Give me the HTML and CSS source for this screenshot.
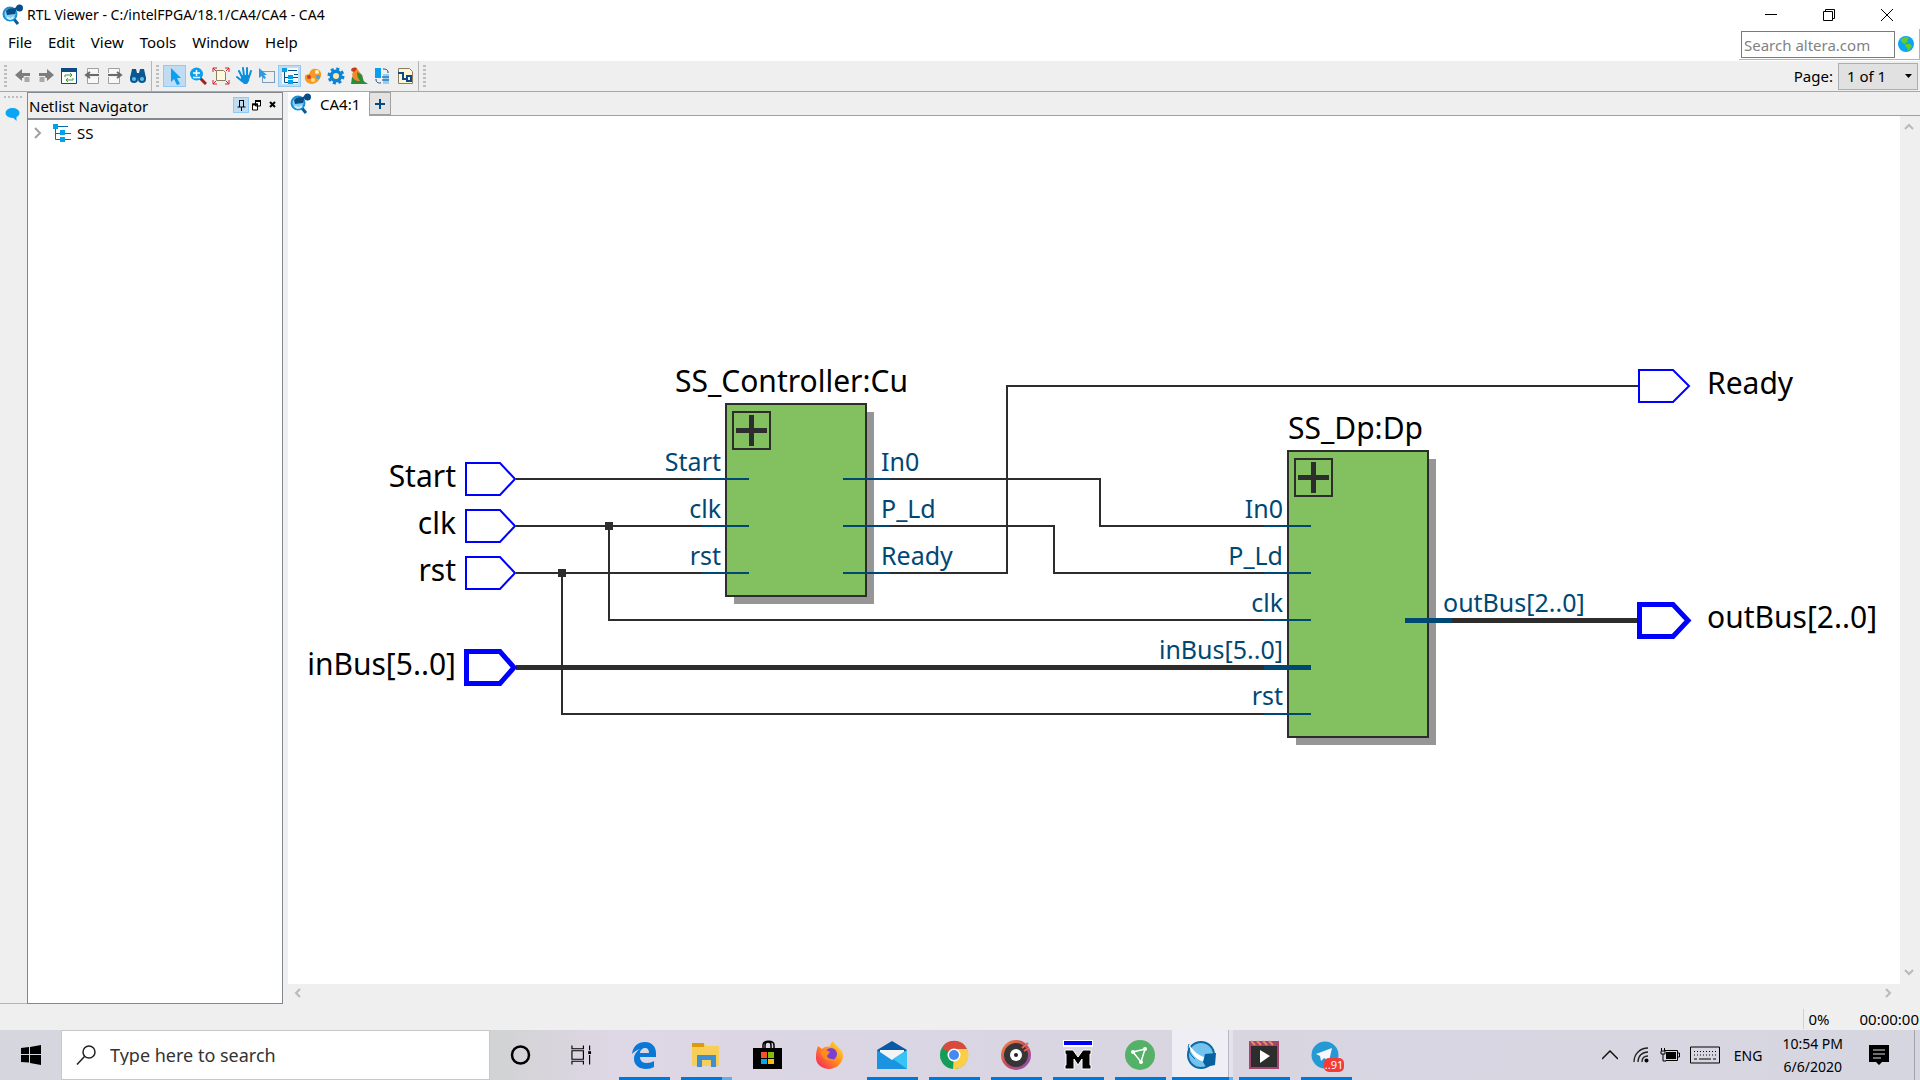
FILE: index.html
```html
<!DOCTYPE html>
<html lang="en">
<head>
<meta charset="utf-8">
<title>RTL Viewer - C:/intelFPGA/18.1/CA4/CA4 - CA4</title>
<link rel="stylesheet" href="styles.css">
</head>
<body>
<svg class="defs" aria-hidden="true">
  <symbol id="viewer" viewBox="0 0 22 22">
    <path d="M11 14l5 6" stroke="#0a5a9c" stroke-width="3"/>
    <circle cx="8" cy="10" r="6.500" fill="#7fd0f7" stroke="#1b8fd0" stroke-width="2"/>
    <path d="M4 7c3-4 7-3 10-1l-1 4-8 1z" fill="#0a4c86"/>
    <path d="M11 6l6-3" stroke="#0a4c86" stroke-width="2"/>
    <circle cx="17.500" cy="4" r="3.500" fill="#0a4c86"/>
    <path d="M5 13c2 3 5 2 7 0" stroke="#c9edff" stroke-width="2" fill="none"/>
  </symbol>
  <symbol id="tree" viewBox="0 0 18 18">
    <path d="M2.500 3v12.500H18M3 9.500h15M5 2.500h10" stroke="#0b6aa8" stroke-width="1" fill="none"/>
    <path d="M0 0h5v5H0zM7 6h5v5H7zM7 13h5v5H7z" fill="#00a2e8"/>
  </symbol>
  <symbol id="chev" viewBox="0 0 10 10"><path d="M1 7l4-4 4 4" stroke="#b9b9b9" stroke-width="2" fill="none"/></symbol>
</svg>

<header class="titlebar">
  <svg class="appicon"><use href="#viewer"/></svg>
  <h1 class="title">RTL Viewer - C:/intelFPGA/18.1/CA4/CA4 - CA4</h1>
  <div class="wincontrols">
    <button aria-label="Minimize"><svg viewBox="0 0 12 12"><path d="M0 5.500h12"/></svg></button>
    <button aria-label="Restore"><svg viewBox="0 0 12 12"><path d="M.5 2.500h9v9h-9zM2.500 2.500v-2h9v9h-2"/></svg></button>
    <button aria-label="Close"><svg viewBox="0 0 12 12"><path d="M0 0l12 12M12 0L0 12"/></svg></button>
  </div>
</header>

<nav class="menubar">
  <button>File</button><button>Edit</button><button>View</button><button>Tools</button><button>Window</button><button>Help</button>
  <form class="websearch">
    <input type="text" placeholder="Search altera.com" aria-label="Search altera.com">
    <svg class="globe" viewBox="0 0 16 16"><circle cx="8" cy="8" r="8" fill="#0aa5f5"/><path d="M3 3l5-2 3 1-2 2 1 2-3 1 1 2-3-2-2-2zM8 8l4 0 2 2-2 3-2 2-1-3-2-2z" fill="#66cc22"/></svg>
  </form>
</nav>

<div class="toolbars">
  <div class="toolbar">
    <span class="grip"></span>
    <button aria-label="Back"><svg viewBox="0 0 18 18"><path d="M1 8l7-6v4h8v5H8v3z" fill="#7d7d7d"/><path d="M10 9.500h6v6h-6z" fill="#a9a9a9" stroke="#efefef"/></svg></button>
    <button aria-label="Forward"><svg viewBox="0 0 18 18"><path d="M17 8l-7-6v4H2v5h8v3z" fill="#7d7d7d"/><path d="M2 9.500h6v6H2z" fill="#a9a9a9" stroke="#efefef"/></svg></button>
    <button aria-label="Refresh"><svg viewBox="0 0 18 18"><path d="M1.500 1.500h15v15h-15z" fill="#fff" stroke="#0d4b86"/><path d="M1 1h16v4H1z" fill="#0d4b86"/><path d="M5 10V8h7m-2-2l2 2-2 2M13 11v2H6m2-2l-2 2 2 2" stroke="#3e9b35" stroke-width="1" fill="none"/></svg></button>
    <button aria-label="Previous page"><svg viewBox="0 0 18 18"><path d="M4.500 6V1.500h11V6M4.500 10v6.500h11V10" fill="#f8f8f8" stroke="#a0a0a0"/><path d="M16 8H3m4-3L3 8l4 3" stroke="#6b6b6b" stroke-width="2" fill="none"/></svg></button>
    <button aria-label="Next page"><svg viewBox="0 0 18 18"><path d="M2.500 6V1.500h11V6M2.500 10v6.500h11V10" fill="#f8f8f8" stroke="#a0a0a0"/><path d="M2 8h13m-4-3l4 3-4 3" stroke="#6b6b6b" stroke-width="2" fill="none"/></svg></button>
    <button aria-label="Find"><svg viewBox="0 0 18 18"><path d="M3 2h4l1 4h2l1-4h4l2 9H1z" fill="#0b5791"/><circle cx="5" cy="12" r="4" fill="#0b5791"/><circle cx="13" cy="12" r="4" fill="#0b5791"/><circle cx="5" cy="12" r="2" fill="#5fc0f0"/><circle cx="13" cy="12" r="2" fill="#5fc0f0"/></svg></button>
  </div>
  <div class="toolbar">
    <span class="grip"></span>
    <button class="on" aria-label="Select"><svg viewBox="0 0 18 18"><path d="M5 1v14l3-3 3 6 3-1-3-6h4z" fill="#0b9ff0"/></svg></button>
    <button aria-label="Zoom"><svg viewBox="0 0 18 18"><path d="M11 11l6 6" stroke="#a32020" stroke-width="3"/><circle cx="7.500" cy="7" r="6.500" fill="#0b9ff0"/><path d="M4 6h7M7.500 3v6M4 10.500h7" stroke="#fff" stroke-width="1.500"/></svg></button>
    <button aria-label="Fit in window"><svg viewBox="0 0 18 18"><path d="M4.500 3.500h7l2 2v8h-9z" fill="#fff8dc" stroke="#8a8060"/><path d="M1 5V1h4M1 1l3 3M13 1h4v4M17 1l-3 3M1 13v4h4M1 17l3-3M13 17h4v-4M17 17l-3-3" stroke="#e01b24" fill="none"/></svg></button>
    <button aria-label="Hand"><svg viewBox="0 0 18 18"><path d="M4 4l3 6M8 1l1 8M12 1v8M16 4l-2 6M2 10l5 4" stroke="#0b8fe0" stroke-width="2" stroke-linecap="round"/><path d="M6 8h9l-1 6-2 3H9l-3-3z" fill="#0b8fe0"/></svg></button>
    <button aria-label="Area selection"><svg viewBox="0 0 18 18"><path d="M4.500 4.500h12v11h-12z" fill="none" stroke="#0d4b86" stroke-dasharray="1 1"/><path d="M1 1v10l3-2 2 3 2-1-2-3h3z" fill="#2a9be0"/></svg></button>
    <button class="on" aria-label="Netlist Navigator"><svg viewBox="0 0 18 18"><rect x="1" y="1" width="16" height="16" fill="#f4fafe"/><path d="M3.500 4v11.500H17M3 10.500h14M7 3.500h9M13 7.500h4" stroke="#0d4b86" fill="none"/><path d="M1 1h5v4H1zM7 8h5v4H7zM7 13h5v4H7z" fill="#00a2e8"/></svg></button>
    <button aria-label="Color settings"><svg viewBox="0 0 18 18"><path d="M9 2c6-1 9 3 8 7s-5 8-9 8c-5 0-8-4-7-8 0-2 3-1 4-2s1-4 4-5z" fill="#f59a23"/><circle cx="13" cy="5" r="2" fill="#fff2c0"/><circle cx="14" cy="10" r="2" fill="#3ba7e8"/><circle cx="5" cy="10" r="2" fill="#d43a2a"/><circle cx="9" cy="13" r="2" fill="#fbe08a"/></svg></button>
    <button aria-label="Options"><svg viewBox="0 0 18 18"><circle cx="9" cy="9" r="7" fill="none" stroke="#0b84d8" stroke-width="3" stroke-dasharray="3 2.500"/><circle cx="9" cy="9" r="5" fill="#0b84d8" stroke="#0b84d8" stroke-width="3"/><circle cx="9" cy="9" r="3" fill="#ffe9a0"/></svg></button>
    <button aria-label="Bird's eye view"><svg viewBox="0 0 18 18"><path d="M2 10l4 1 6 2 6 4H1z" fill="#2e8b3a"/><path d="M1 4c1-4 6-4 7-1l4 5 1 6H8C3 13 1 9 3 5z" fill="#f08a2c"/><path d="M7 5l5 3 2 7-4-1C8 11 7 9 7 5z" fill="#2e8b3a"/><path d="M1 3c1-3 5-3 6-1L4 5z" fill="#c33b1c"/></svg></button>
    <button aria-label="Highlight fan-out"><svg viewBox="0 0 18 18"><path d="M2 1h6v10H2z" fill="#0b9ff0"/><path d="M10 7h6v10h-6z" fill="#8fd0f5"/><path d="M10 2c4 0 5 1 5 4M8 16c-4 0-5-1-5-4M9 10h7M9 13h7" stroke="#0d4b86" fill="none" stroke-width="1"/></svg></button>
    <button aria-label="Layout"><svg viewBox="0 0 18 18"><path d="M2.500 1.500h11l3 3v12h-14z" fill="#fff6d6" stroke="#8a8060"/><path d="M2 6h5v6h4M11 9h4v5h-4z" stroke="#0d4b86" stroke-width="2" fill="none"/></svg></button>
  </div>
  <div class="toolbar last"><span class="grip"></span></div>
  <div class="pager">
    <label for="page">Page:</label>
    <span class="selectwrap"><select id="page"><option>1 of 1</option></select><svg viewBox="0 0 7 4"><path d="M0 0h7L3.500 4z"/></svg></span>
  </div>
</div>

<main class="workspace">
  <aside class="strip"><span class="hgrip"></span><svg viewBox="0 0 14 13"><ellipse cx="7" cy="5" rx="7" ry="5" fill="#0aa5f5"/><path d="M6 8h5l0 5z" fill="#0aa5f5"/></svg></aside>
  <section class="navigator">
    <header class="navhead">
      <h2>Netlist Navigator</h2>
      <button class="on" aria-label="Pin"><svg viewBox="0 0 14 14"><path d="M5 2.500h5M5.500 2v7M9.500 2v7M3.500 9h8M7.500 9v4" stroke="#000" fill="none"/></svg></button>
      <button aria-label="Float"><svg viewBox="0 0 14 14"><path d="M5.500 3v5h5V3zM2.500 6v6h5V6z" fill="#fff" stroke="#000"/><path d="M5 3h6M2 6.500h6" stroke="#000" stroke-width="2"/></svg></button>
      <button aria-label="Close panel"><svg viewBox="0 0 14 14"><path d="M4 4l5 5M9 4L4 9" stroke="#000" stroke-width="2"/></svg></button>
    </header>
    <ul class="tree">
      <li><svg class="twisty" viewBox="0 0 8 12"><path d="M1 1l5 5-5 5" stroke="#a0a0a0" stroke-width="2" fill="none"/></svg><svg class="node"><use href="#tree"/></svg>SS</li>
    </ul>
  </section>
  <section class="document">
    <div class="tabs">
      <button class="tab"><svg><use href="#viewer"/></svg>CA4:1</button>
      <button class="addtab" aria-label="New tab"><svg viewBox="0 0 10 10"><path d="M0 5h10M5 0v10" stroke="#004a85" stroke-width="2"/></svg></button>
    </div>
    <div class="sheet">
      <svg class="schematic" viewBox="288 116 1612 868" preserveAspectRatio="xMidYMid meet">
        <g class="shadow"><rect x="734" y="412" width="140" height="192"/><rect x="1296" y="459" width="140" height="286"/></g>
        <g class="block"><rect x="726" y="404" width="140" height="192"/><rect x="1288" y="451" width="140" height="286"/></g>
        <g class="wire">
          <path d="M516 479H702M516 526H702M516 573H702M609 526V620H1264M562 573V714H1264"/>
          <path d="M890 479H1100V526H1264M890 526H1054V573H1264M890 573H1007V386H1638"/>
          <rect x="733" y="412" width="37" height="37"/><rect x="1295" y="459" width="37" height="37"/>
        </g>
        <path class="bus" d="M516 667.500H1264M1452 620.500H1638"/>
        <path class="plus" d="M736 430.500h31M751.500 415v31M1298 477.500h31M1313.500 462v31"/>
        <path class="dots" d="M605 522h8v8h-8zM558 569h8v8h-8z"/>
        <path class="pin" d="M702 479h47M702 526h47M702 573h47M843 479h47M843 526h47M843 573h47M1264 526h47M1264 573h47M1264 620h47M1264 714h47"/>
        <path class="pin wide" d="M1264 667.500h47M1405 620.500h47"/>
        <g class="port">
          <path d="M466 463H500L515 479L500 495H466Z"/><path d="M466 510H500L515 526L500 542H466Z"/><path d="M466 557H500L515 573L500 589H466Z"/>
          <path d="M1639 370H1673L1689 386L1673 402H1639Z"/>
        </g>
        <g class="port wide"><path d="M466.500 651.500H500L514 667.500L500 683.500H466.500Z"/><path d="M1639.500 604.500H1673L1688 620.500L1673 636.500H1639.500Z"/></g>
        <g class="name">
          <text x="675" y="392">SS_Controller:Cu</text><text x="1288" y="439">SS_Dp:Dp</text>
          <text x="1707" y="394">Ready</text><text x="1707" y="628">outBus[2..0]</text>
        </g>
        <g class="name end"><text x="456" y="487">Start</text><text x="456" y="534">clk</text><text x="456" y="581">rst</text><text x="456" y="675">inBus[5..0]</text></g>
        <g class="pinname"><text x="881" y="471">In0</text><text x="881" y="518">P_Ld</text><text x="881" y="565">Ready</text><text x="1443" y="612">outBus[2..0]</text></g>
        <g class="pinname end"><text x="721" y="471">Start</text><text x="721" y="518">clk</text><text x="721" y="565">rst</text><text x="1283" y="518">In0</text><text x="1283" y="565">P_Ld</text><text x="1283" y="612">clk</text><text x="1283" y="659">inBus[5..0]</text><text x="1283" y="705">rst</text></g>
      </svg>
      <div class="vscroll"><svg><use href="#chev"/></svg><svg class="down"><use href="#chev"/></svg></div>
      <div class="hscroll"><svg class="left"><use href="#chev"/></svg><svg class="right"><use href="#chev"/></svg></div>
    </div>
  </section>
</main>

<footer class="status"><span class="percent">0%</span><span>00:00:00</span></footer>

<div class="taskbar">
  <button class="start" aria-label="Start"><svg viewBox="0 0 20 20"><path d="M0 3l8-1v7H0zM9 2l11-2v9H9zM0 10h8v7.500L0 17zM9 10h11v10L9 18z"/></svg></button>
  <label class="tasksearch"><svg viewBox="0 0 20 20"><circle cx="13" cy="7" r="6" fill="none" stroke="#222" stroke-width="1.500"/><path d="M8.500 11.500L1 19.500" stroke="#222" stroke-width="1.500"/></svg><input type="text" placeholder="Type here to search" aria-label="Type here to search"></label>
  <button class="sys" aria-label="Cortana"><svg viewBox="0 0 20 20"><circle cx="10" cy="10" r="8.500" fill="none" stroke="#000" stroke-width="2.500"/></svg></button>
  <button class="sys" aria-label="Task View"><svg viewBox="0 0 22 20"><path d="M1 0v3.500h12V0M1 20v-3.500h12V20M1 5.500h12v9H1zM19.500 0v5M19.500 10v10" fill="none" stroke="#000" stroke-width="1.200"/><path d="M18 6h3v3h-3z"/></svg></button>
  <div class="apps">
    <button class="open" aria-label="Edge"><svg viewBox="0 0 30 30"><path d="M3 14C4 6 9 2 16 2c8 0 11 6 11 11v4H11c0 5 4 6 7 6 3 0 5-1 7-2v6c-2 1-5 2-8 2-7 0-12-4-12-10 0-5 3-8 6-10-4 1-6 3-8 5zm8-1h9c0-4-2-5-4-5s-5 2-5 5z" fill="#0a78d6"/></svg></button>
    <button class="open more" aria-label="File Explorer"><svg viewBox="0 0 30 30"><path d="M1 3h12l2 3h13v20H1z" fill="#f8ce5b"/><path d="M1 3h12v4H1z" fill="#dc9a0c"/><path d="M6 27V15h19v12h-5v-7h-9v7z" fill="#3f90d2"/></svg></button>
    <button aria-label="Microsoft Store"><svg viewBox="0 0 30 30"><path d="M10 9V5c0-5 11-5 11 0v4M12 9V5c0-4 6-4 6 0v4" fill="none" stroke="#000" stroke-width="1.500"/><path d="M0 8h29v21H0z"/><path d="M8 12h6v6H8z" fill="#f35325"/><path d="M15 12h6v6h-6z" fill="#81bc06"/><path d="M8 19h6v5H8z" fill="#05a6f0"/><path d="M15 19h6v5h-6z" fill="#ffba08"/></svg></button>
    <button aria-label="Firefox"><svg viewBox="0 0 30 30"><defs><linearGradient id="ff" x1="1" y1="0" x2="0" y2="1"><stop offset="0" stop-color="#ffe83b"/><stop offset=".5" stop-color="#ff8a1e"/><stop offset="1" stop-color="#f5156c"/></linearGradient></defs><path d="M3 6l4 3c2-2 5-3 8-2 0-2 1-4 3-6 2 5 11 8 10 16-1 7-7 12-14 12S0 24 1 16c0-4 1-7 2-10z" fill="url(#ff)"/><circle cx="16" cy="14" r="6" fill="#7b3fd3"/><path d="M5 11l6-1 4 2-3 4c1 3 4 3 7 3-6 4-12 0-14-8z" fill="#ff8a1e"/></svg></button>
    <button class="open" aria-label="Mail"><svg viewBox="0 0 30 30"><path d="M0 10L15 1l15 9v3H0z" fill="#0a58a8"/><path d="M3 10h24v8L15 24 3 18z" fill="#f4f4f4"/><path d="M0 10l15 10 15-10v19H0z" fill="#1a94e0"/><path d="M30 10v19L16 19z" fill="#38c3f4"/></svg></button>
    <button class="open" aria-label="Chrome"><svg viewBox="0 0 30 30"><circle cx="15" cy="15" r="14" fill="#149c58"/><path d="M15 15L3 8A14 14 0 0 1 28 9z" fill="#d94a3d"/><path d="M15 15V9h13A14 14 0 0 1 14 29z" fill="#fbcf45"/><circle cx="15" cy="15" r="6.500" fill="#fff"/><circle cx="15" cy="15" r="5" fill="#4688f1"/></svg></button>
    <button class="open" aria-label="Groove"><svg viewBox="0 0 30 30"><defs><linearGradient id="gr" x1="0" y1="0" x2="1" y2="1"><stop offset="0" stop-color="#f58a38"/><stop offset=".5" stop-color="#c54a60"/><stop offset="1" stop-color="#8454c8"/></linearGradient></defs><circle cx="15" cy="15" r="15" fill="url(#gr)"/><circle cx="15" cy="15" r="12" fill="#363636"/><circle cx="15" cy="15" r="6" fill="#fff"/><circle cx="15" cy="15" r="2" fill="#222"/><path d="M21 8l6-5M23 11l5-3" stroke="#e8644c" stroke-width="2"/></svg></button>
    <button class="open" aria-label="ModelSim"><svg viewBox="0 0 30 30"><path d="M0 0h30v7H0z" fill="#fff"/><path d="M1 1h28v4H1z" fill="#00f"/><path d="M2 10h8l5 7 5-7h8v4h-1v11h1v4h-9V19l-4 6-4-6v10H2v-4h1V14H2z" stroke="#fff"/></svg></button>
    <button class="open" aria-label="Network"><svg viewBox="0 0 30 30"><circle cx="15" cy="15" r="15" fill="#56b168"/><path d="M8 12l12-3-4 13z" fill="none" stroke="#fff" stroke-width="1.500"/><circle cx="8" cy="12" r="2" fill="#fff"/><circle cx="20" cy="9" r="2" fill="#fff"/><circle cx="16" cy="22" r="2" fill="#fff"/></svg></button>
    <button class="open active" aria-label="Quartus"><svg viewBox="0 0 30 30"><circle cx="14" cy="15" r="13" fill="#74c3ee" stroke="#0a69a8" stroke-width="2"/><path d="M2 4C7 13 14 17 24 19l-5 3C10 21 3 14 2 4z" fill="#fff"/><path d="M2 4c-2 4 0 10 6 15" fill="none" stroke="#0a69a8"/><path d="M18 14l11-1-1 12-9 2-3-5z" fill="#0760a0"/></svg></button>
    <button class="open" aria-label="Movies"><svg viewBox="0 0 30 30"><path d="M0 1h30v28H0z" fill="#a3456e"/><path d="M2 6h26v21H2z" fill="#2d2d2d"/><path d="M2 1l4 4M8 1l4 4M14 1l4 4M20 1l4 4" stroke="#f08a50" stroke-width="2"/><path d="M11 10l10 6-10 7z" fill="#fff"/></svg></button>
    <button class="open" aria-label="Telegram"><svg viewBox="0 0 30 30"><circle cx="14" cy="15" r="13.500" fill="#2599d4"/><path d="M5 14l16-6-3 13-5-3-3 3-1-5z" fill="#f2f8fc"/></svg><span class="badge">..91</span></button>
  </div>
  <div class="tray">
    <svg class="caret" viewBox="0 0 16 10"><path d="M0 9l8-8 8 8" fill="none" stroke="#111" stroke-width="1.500"/></svg>
    <svg class="wifi" viewBox="0 0 16 16"><path d="M1 15C1 7 7 1 15 1M5 15C5 9 9 5 15 5M9 15c0-4 2-6 6-6" fill="none" stroke="#222" stroke-width="1.300"/><circle cx="13.500" cy="13.500" r="2"/></svg>
    <svg class="battery" viewBox="0 0 20 14"><path d="M4.500 2.500h13v10h-12M18 5h1.500v4H18" fill="none" stroke="#000"/><path d="M6 4h10v7H6z"/><path d="M1 3h4v3H1zM1.500 0v3M4.500 0v3M3 6v7h3" stroke="#000" fill="none"/></svg>
    <svg class="keyboard" viewBox="0 0 30 18"><path d="M.5 1h29v16H.5z" fill="none" stroke="#000"/><path d="M4 5.500h22M4 9h22" stroke="#000" stroke-dasharray="1 2"/><path d="M4 13h3M9 13h12M23 13h3" stroke="#000"/></svg>
    <span class="lang">ENG</span>
    <time class="clock">10:54 PM<br>6/6/2020</time>
    <button class="note" aria-label="Notifications"><svg viewBox="0 0 20 20"><path d="M0 0h20v17h-7l-3 3-3-3H0z"/><path d="M4 5h12M4 9h12M4 13h8" stroke="#ddd"/></svg></button>
  </div>
</div>
</body>
</html>
```
FILE: styles.css
```css
* { box-sizing: border-box; }
html, body { height: 100%; }
body {
  margin: 0;
  display: flex;
  flex-direction: column;
  background: #efefef;
  color: #000;
  font: 15px/20px "Noto Sans", "Open Sans", sans-serif;
  overflow: hidden;
}
button, input, select { font: inherit; color: inherit; margin: 0; padding: 0; border: 0; background: none; border-radius: 0; }
svg { display: block; flex: none; }
h1, h2, ul { margin: 0; padding: 0; font-size: 15px; font-weight: 400; list-style: none; }
.defs { position: absolute; width: 0; height: 0; }

.titlebar { display: flex; align-items: center; height: 29px; background: #fff; padding-left: 2px; }
.appicon { width: 22px; height: 22px; }
.title { flex: 1; padding-left: 3px; font-size: 14px; }
.wincontrols { display: flex; padding-right: 4px; }
.wincontrols button { width: 58px; height: 29px; display: grid; place-items: center; }
.wincontrols svg { width: 12px; height: 12px; fill: none; stroke: #000; }

.menubar { display: flex; gap: 16px; height: 32px; padding-left: 8px; background: #fff; }
.menubar > button { height: 26px; }
.websearch { margin-left: auto; display: flex; gap: 3px; align-items: center; height: 31px; padding: 0 5px 0 2px; border-right: 1px solid #b4b4b4; border-bottom: 1px solid #b4b4b4; }
.websearch input { width: 154px; height: 27px; border: 1px solid #7a7a7a; padding: 1px 2px 0; background: #fff; }
.websearch input::placeholder { color: #828282; opacity: 1; }
.globe { width: 16px; height: 16px; }

.toolbars { display: flex; height: 31px; border-bottom: 1px solid #a8a8a8; }
.toolbar { display: flex; align-items: center; padding: 0 1px 0 4px; border-right: 1px solid #b4b4b4; }
.toolbar:first-child { width: 152px; }
.toolbar + .toolbar { width: 267px; }
.toolbar.last { width: auto; border: 0; }
.grip { width: 3px; height: 22px; margin-right: 4px; background: repeating-linear-gradient(#bdbdbd 0 2px, transparent 2px 4px); }
.toolbar button { flex: none; width: 23px; height: 22px; display: grid; place-items: center; border: 1px solid transparent; }
.toolbar svg { width: 18px; height: 18px; }
.toolbar .on, .navhead .on { background: #c0dcf3; border: 1px solid #90c8f6; }
.pager { display: flex; align-items: center; gap: 5px; margin-left: auto; padding-right: 2px; }
.selectwrap { display: flex; align-items: center; width: 80px; height: 27px; border: 1px solid #adadad; background: #e1e1e1; padding-right: 5px; }
.selectwrap select { appearance: none; flex: 1; height: 25px; padding-left: 8px; }
.selectwrap svg { width: 7px; height: 4px; }

.workspace { flex: 1; min-height: 0; display: flex; }
.strip { width: 27px; border-bottom: 1px solid #b4b4b4; display: flex; flex-direction: column; align-items: center; gap: 10px; padding: 4px 2px 0 0; }
.hgrip { width: 18px; height: 2px; background: repeating-linear-gradient(90deg, #bdbdbd 0 2px, transparent 2px 4px); }
.strip svg { width: 15px; height: 13px; }
.navigator { width: 256px; display: flex; flex-direction: column; border: 1px solid #828790; }
.navhead { display: flex; align-items: center; height: 27px; padding: 1px 1px 0; border-bottom: 2px solid #828790; }
.navhead h2 { flex: 1; }
.navhead button { width: 16px; height: 16px; display: grid; place-items: center; margin-bottom: 2px; }
.navhead svg { width: 14px; height: 14px; }
.tree { flex: 1; background: #fff; padding: 3px 6px; }
.tree li { display: flex; align-items: center; height: 20px; }
.twisty { width: 8px; height: 12px; margin-right: 11px; }
.node { width: 18px; height: 18px; margin-right: 6px; }

.document { flex: 1; min-width: 0; display: flex; flex-direction: column; padding-left: 5px; }
.tabs { display: flex; height: 24px; border-bottom: 1px solid #a0a0a0; }
.tab { display: flex; align-items: center; width: 82px; height: 24px; background: #fff; border-right: 1px solid #a0a0a0; gap: 8px; padding-left: 2px; }
.tab svg { width: 22px; height: 22px; }
.addtab { width: 21px; height: 23px; display: grid; place-items: center; border: 1px solid #a0a0a0; border-left: 0; background: #e3e3e3; }
.addtab svg { width: 10px; height: 10px; }
.sheet { flex: 1; min-height: 0; display: grid; grid-template: minmax(0, 1fr) 20px / minmax(0, 1fr) 20px; }
.schematic { width: 100%; height: 100%; background: #fff; }
.vscroll { display: flex; flex-direction: column; justify-content: space-between; align-items: center; padding: 6px 2px 7px 0; }
.hscroll { display: flex; justify-content: space-between; align-items: center; padding: 0 7px 2px 5px; }
.vscroll svg, .hscroll svg { width: 10px; height: 10px; }
.down { transform: rotate(180deg); }
.left { transform: rotate(270deg); }
.right { transform: rotate(90deg); }

.shadow { fill: #969696; }
.block { fill: #83c060; stroke: #2d2d2d; stroke-width: 2px; }
.wire { fill: none; stroke: #2d2d2d; stroke-width: 2px; }
.bus, .plus { fill: none; stroke: #2d2d2d; stroke-width: 5px; }
.dots { fill: #2d2d2d; }
.pin { stroke: #004874; stroke-width: 2px; }
.port { fill: #fff; stroke: #00f; stroke-width: 2px; }
.pin.wide, .port.wide { stroke-width: 5px; }
.name { font-size: 30px; }
.pinname { font-size: 25px; fill: #004874; }
.end { text-anchor: end; }

.status { display: flex; height: 26px; justify-content: flex-end; align-items: center; gap: 30px; padding: 4px 1px 0 0; }
.percent { border-left: 1px solid #d0d0d0; padding-left: 4px; }

.taskbar { display: flex; height: 50px; background: linear-gradient(90deg, #d6d6df 0 3%, #d2d3d4 26%, #ded7e5 32%, #d9d5e2 52%, #d6d6e0); }
.taskbar button { display: grid; place-items: center; flex: none; }
.start { width: 61px; }
.start svg { width: 20px; height: 20px; }
.tasksearch { display: flex; align-items: center; gap: 14px; width: 429px; padding-left: 14px; background: #fff; border: 1px solid #c8c8c8; }
.tasksearch svg { width: 20px; height: 20px; }
.tasksearch input { flex: 1; min-width: 0; outline: 0; font-size: 18px; }
.tasksearch input::placeholder { color: #333; opacity: 1; }
.sys { width: 61px; }
.sys svg { width: 21px; height: 20px; }
.apps { display: flex; padding-left: 1px; }
.taskbar .apps button { position: relative; width: 62px; }
.apps svg { width: 30px; height: 30px; }
.open::after { content: ""; position: absolute; left: 6px; right: 5px; bottom: 0; height: 3px; background: #0078d7; }
.more::after { background: linear-gradient(90deg, #0078d7 80%, #66ade6 80%); }
.active { background: linear-gradient(90deg, transparent 1px, #efeef4 1px 57px, #b8b8c4 57px 58px, #e4e3eb 58px); }
.active::after { left: 1px; right: 0; background: linear-gradient(90deg, #0078d7 93%, #66ade6 93%); }
.badge { position: absolute; left: 29px; top: 28px; width: 20px; height: 14px; border-radius: 5px; background: #f43b38; color: #fff; font-size: 11px; line-height: 14px; text-align: center; }
.tray { margin-left: auto; display: flex; align-items: center; font-size: 14px; line-height: 23px; padding-right: 5px; }
.caret { width: 16px; height: 10px; margin-right: 15px; }
.wifi { width: 16px; height: 16px; margin-right: 11px; }
.battery { width: 20px; height: 14px; margin-right: 10px; }
.keyboard { width: 30px; height: 18px; margin-right: 14px; }
.lang { margin-right: 20px; }
.clock { text-align: center; margin-right: 26px; }
.note { width: 46px; height: 50px; border-right: 1px solid #a4a4ac; }
.taskbar .note { justify-items: start; }
.note svg { width: 20px; height: 20px; }
```
